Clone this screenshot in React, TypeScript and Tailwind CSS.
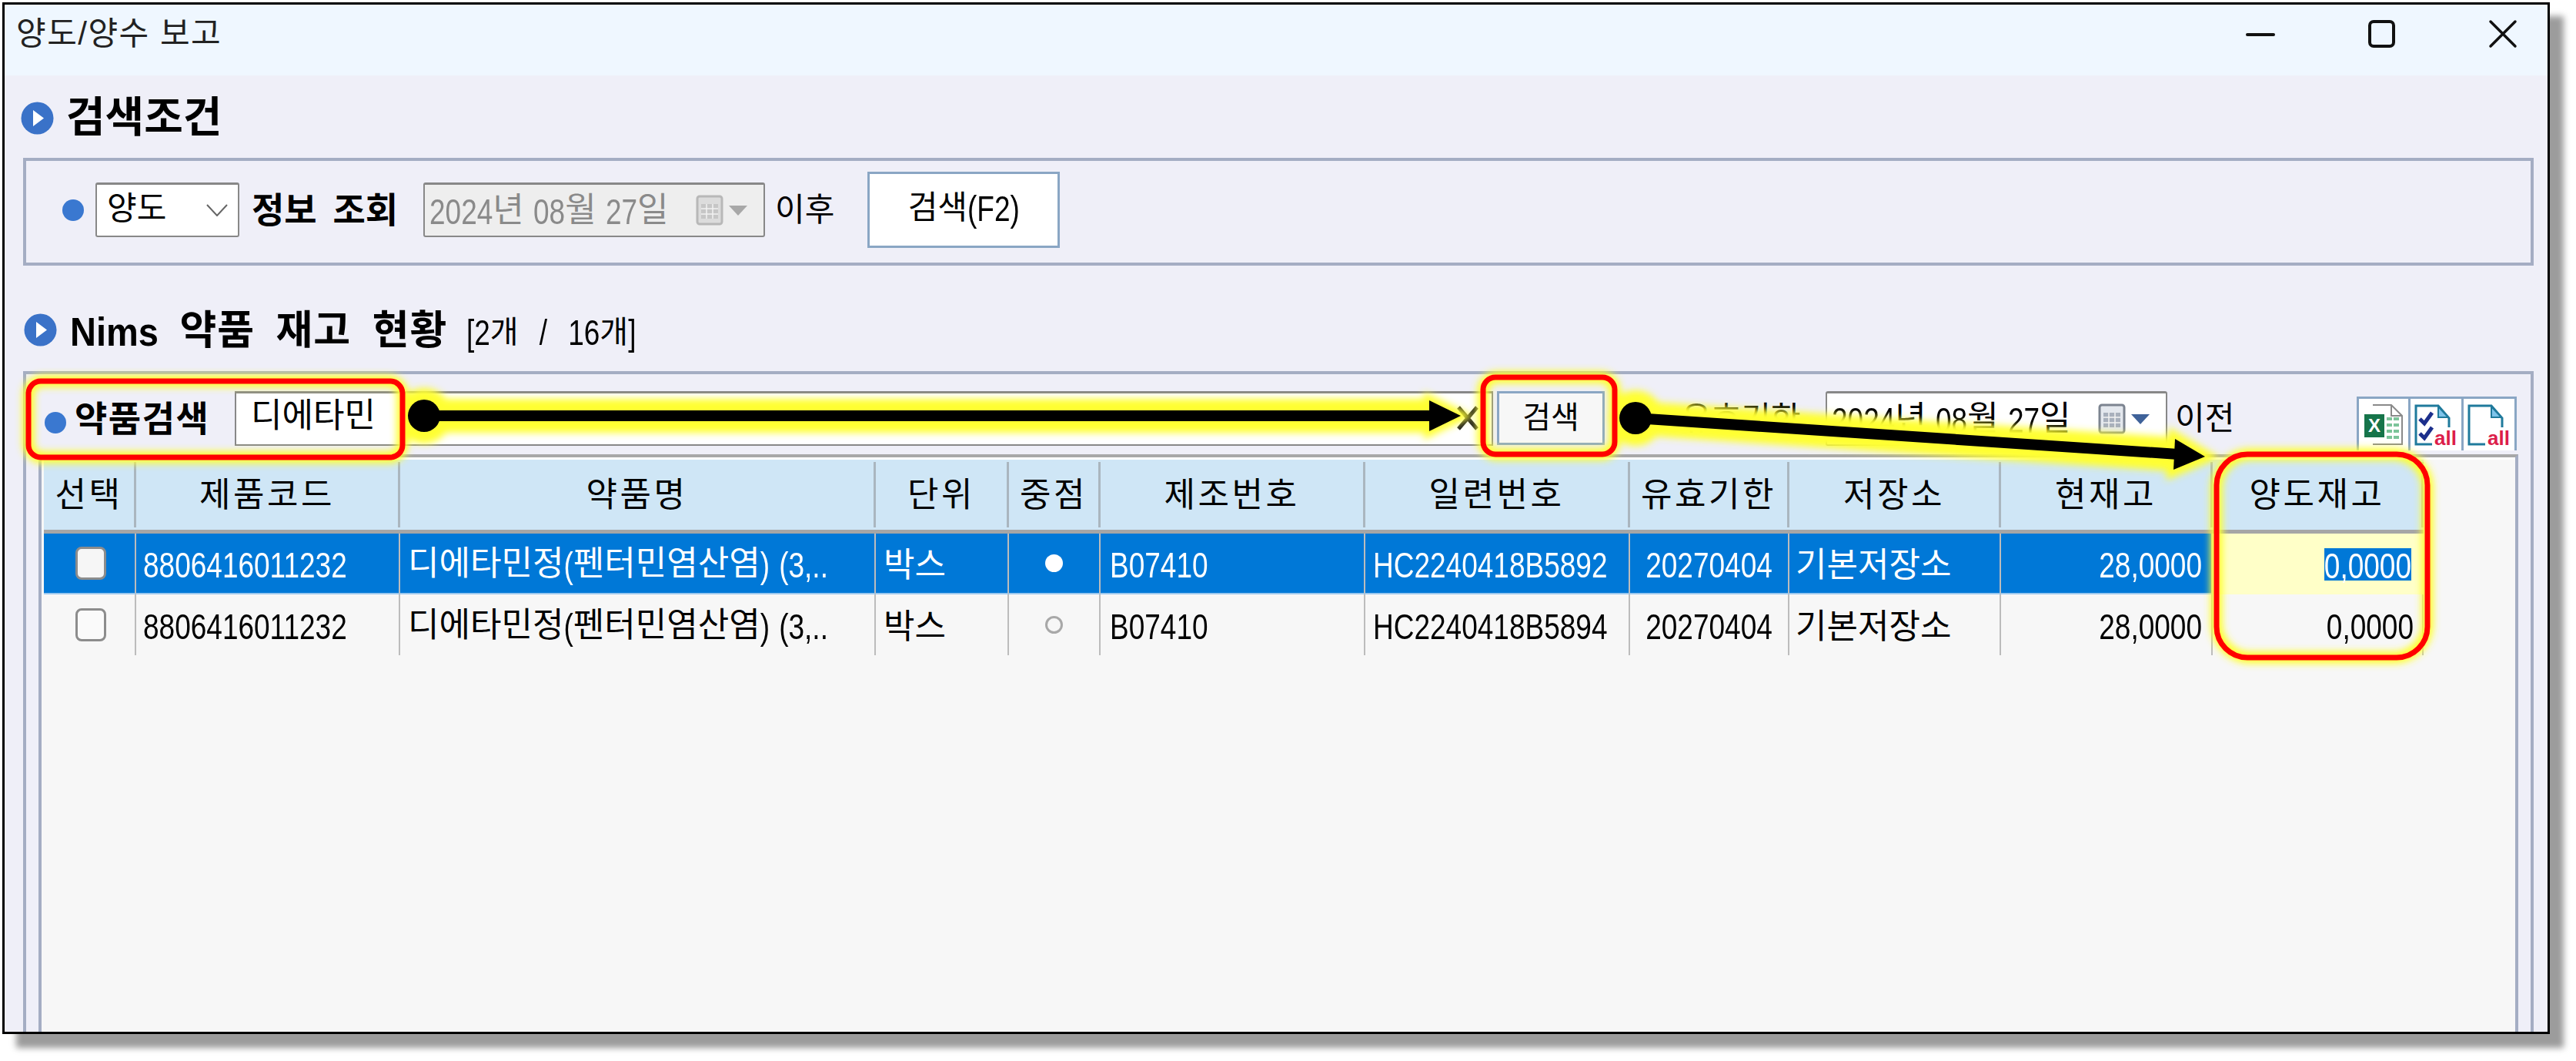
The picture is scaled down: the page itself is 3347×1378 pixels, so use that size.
import React from 'react';

const GRID_COLS = 'grid grid-cols-[120px_343px_618px_173px_119px_344px_344px_207px_275px_275px_274px]';

const HEADERS = ['선택', '제품코드', '약품명', '단위', '중점', '제조번호', '일련번호', '유효기한', '저장소', '현재고', '양도재고'];

const ROWS = [
  { code: '8806416011232', name: '디에타민정(펜터민염산염) (3,..', lot: 'B07410', serial: 'HC2240418B5892', selected: true },
  { code: '8806416011232', name: '디에타민정(펜터민염산염) (3,..', lot: 'B07410', serial: 'HC2240418B5894', selected: false },
];

// latin and digits in the reference are tall and narrow, hangul is not
const Mixed = ({ text }: { text: string }) => (
  <span>
    {text.split(/([^가-힣\s]+)/).map((part, i) =>
      i % 2 === 1 ? (
        <span key={i} className="inline-block text-[37px] scale-y-[1.26] tracking-normal">
          {part}
        </span>
      ) : (
        part
      ),
    )}
  </span>
);

const SectionDot = () => (
  <svg width="43" height="43" viewBox="0 0 43 43" className="shrink-0">
    <circle cx="21.5" cy="21.5" r="21" fill="#3a72c8" />
    <path d="M16 11 L30 21.5 L16 32 Z" fill="#ffffff" />
  </svg>
);

const Bullet = () => <div className="w-[28px] h-[28px] rounded-full bg-[#3a78d0] shrink-0" />;

const CalendarIcon = ({ disabled }: { disabled?: boolean }) => (
  <svg width="68" height="40" viewBox="0 0 68 40" className="shrink-0">
    <rect x="2" y="2" width="32" height="36" rx="3" fill={disabled ? '#dcdcdc' : '#e4e8ee'} stroke={disabled ? '#b8b8b8' : '#7c8490'} strokeWidth="3" />
    <rect x="7" y="12" width="22" height="19" fill={disabled ? '#c6c6c6' : '#a8b0bc'} />
    <path d="M14 12V31M22 12V31M7 18H29M7 25H29" stroke="#f2f2f2" strokeWidth="1.5" />
    <path d="M43 14H67L55 27Z" fill={disabled ? '#a8a8a8' : '#3f6299'} />
  </svg>
);

const ExcelIcon = () => (
  <svg width="52" height="56" viewBox="0 0 52 56">
    <path d="M12 2H36L50 16V53H12" fill="#ffffff" stroke="#8a8a8a" strokeWidth="2" />
    <path d="M36 2V16H50" fill="none" stroke="#8a8a8a" strokeWidth="2" />
    <path d="M30 20H46M30 28H46M30 36H46M30 44H46" stroke="#7cc49a" strokeWidth="4" strokeDasharray="7 2" />
    <rect x="1" y="14" width="26" height="30" fill="#16744a" />
    <text x="14" y="37" textAnchor="middle" fontSize="24" fontWeight="700" fill="#ffffff" fontFamily="Liberation Sans">X</text>
  </svg>
);

const AllIcon = ({ checks }: { checks?: boolean }) => (
  <svg width="58" height="60" viewBox="0 0 58 60" className="mt-[6px]">
    <path d="M24 52H3V2H32L46 18V30" fill="none" stroke="#1f7a9c" strokeWidth="3" />
    <path d="M32 3V17H45Z" fill="#7fc4ea" stroke="#1f7a9c" strokeWidth="2" />
    {checks && <path d="M8 19L14 25L24 11M8 38L14 44L24 30" fill="none" stroke="#1c2f8c" strokeWidth="5" />}
    <text x="56" y="53" textAnchor="end" fontSize="26" fontWeight="700" fill="#dc1e4a" fontFamily="Liberation Sans">all</text>
  </svg>
);

const Annotations = () => (
  <svg width="3347" height="1378" viewBox="0 0 3347 1378" className="absolute left-0 top-0 pointer-events-none">
    <defs>
      <filter id="glow" x="-10%" y="-200%" width="120%" height="500%">
        <feGaussianBlur stdDeviation="5" />
      </filter>
    </defs>
    <g filter="url(#glow)" fill="none" stroke="#ffff30">
      <rect x="37" y="495" width="486" height="99" rx="18" strokeWidth="16" />
      <rect x="1927" y="490" width="171" height="100" rx="18" strokeWidth="16" />
      <rect x="2880" y="590" width="274" height="264" rx="44" strokeWidth="16" />
      <path d="M551 540H1860" strokeWidth="44" />
      <path d="M2125 543L2840 591" strokeWidth="44" />
      <circle cx="551" cy="540" r="22" strokeWidth="28" />
      <circle cx="2125" cy="543" r="22" strokeWidth="28" />
      <path d="M1857 520L1898 540L1857 560Z" strokeWidth="14" />
      <path d="M2826 570L2865 593L2824 610Z" strokeWidth="18" />
    </g>
    <g fill="none" stroke="#ff0000" strokeWidth="7">
      <rect x="37" y="495" width="486" height="99" rx="16" />
      <rect x="1927" y="490" width="171" height="100" rx="16" />
      <rect x="2880" y="590" width="274" height="264" rx="40" />
    </g>
    <path d="M551 540H1860" stroke="#000000" strokeWidth="14" />
    <path d="M1857 520L1898 540L1857 560Z" fill="#000000" />
    <circle cx="551" cy="540" r="21" fill="#000000" />
    <path d="M2125 543L2830 590" stroke="#000000" strokeWidth="14" />
    <path d="M2826 570L2865 593L2824 610Z" fill="#000000" />
    <circle cx="2125" cy="543" r="21" fill="#000000" />
  </svg>
);

export default function App() {
  return (
    <div className="relative w-[3347px] h-[1378px] overflow-hidden bg-white font-['Liberation_Sans','Noto_Sans_CJK_KR',sans-serif] text-[44px] leading-none text-black">
      <div className="ml-[3px] mt-[3px] w-[3310px] h-[1340px] border-[3px] border-black flex flex-col shadow-[18px_18px_8px_#9c9c9c]">
        {/* title bar */}
        <div className="h-[92px] shrink-0 bg-[#eff7ff] flex items-start pl-[15px] pt-[17px]">
          <span className="text-[42px] text-[#222] tracking-[1.5px]">양도/양수 보고</span>
          <div className="ml-auto flex items-start mt-[2px]">
            <svg width="40" height="40" viewBox="0 0 40 40" className="mr-[118px]">
              <path d="M2 20H36" stroke="#111" strokeWidth="4" strokeLinecap="round" />
            </svg>
            <svg width="38" height="38" viewBox="0 0 38 38" className="mr-[119px]">
              <rect x="3" y="3" width="31" height="32" rx="5" fill="none" stroke="#111" strokeWidth="4" />
            </svg>
            <svg width="38" height="38" viewBox="0 0 38 38" className="mr-[39px]">
              <path d="M3 3L35 35M35 3L3 35" stroke="#111" strokeWidth="3.5" strokeLinecap="round" />
            </svg>
          </div>
        </div>

        <div className="flex-1 bg-[#efeff8] flex flex-col min-h-0">
          {/* 검색조건 */}
          <div className="flex items-center h-[47px] mt-[32px] ml-[21px] gap-[16px]">
            <SectionDot />
            <span className="text-[55px] font-bold -mt-[2px]">검색조건</span>
          </div>
          <div className="mt-[28px] ml-[24px] w-[3262px] h-[140px] shrink-0 border-[4px] border-[#a4adc3] flex items-center pl-[47px] pb-[5px]">
            <Bullet />
            <div className="ml-[15px] w-[187px] h-[71px] bg-white border-2 border-[#888] border-t-[3px] rounded-[3px] flex items-center pl-[13px] justify-between pr-[13px]">
              <span className="text-[42px] -mt-[5px]">양도</span>
              <svg width="28" height="16" viewBox="0 0 28 16">
                <path d="M1 1L14 15L27 1" fill="none" stroke="#666" strokeWidth="2" />
              </svg>
            </div>
            <span className="ml-[16px] font-bold text-[46px] [word-spacing:8px] w-[223px] shrink-0">정보 조회</span>
            <div className="w-[444px] h-[71px] bg-[#eeeeee] border-2 border-[#888] border-t-[3px] rounded-[3px] flex items-center pl-[6px]">
              <span className="text-[#8a8a8a] w-[346px] shrink-0">
                <Mixed text="2024년 08월 27일" />
              </span>
              <CalendarIcon disabled />
            </div>
            <span className="ml-[13px] text-[42px]">이후</span>
            <div className="ml-[43px] w-[250px] h-[99px] bg-white border-[3px] border-[#8aa6c4] flex items-center justify-center text-[42px] pb-[6px]">
              <Mixed text="검색(F2)" />
            </div>
          </div>

          {/* Nims 약품 재고 현황 */}
          <div className="flex items-center h-[47px] mt-[60px] ml-[25px]">
            <SectionDot />
            <span className="ml-[17px] font-bold text-[52px] [word-spacing:12px] tracking-[1px] w-[515px] shrink-0">
              <span className="inline-block text-[47px] tracking-normal scale-y-[1.12]">Nims</span> 약품 재고 현황
            </span>
            <span className="text-[40px] mt-[4px] [word-spacing:16px]">
              <Mixed text="[2개 / 16개]" />
            </span>
          </div>
          <div className="mt-[30px] ml-[24px] w-[3262px] flex-1 min-h-0 border-[4px] border-b-0 border-[#a4adc3] flex flex-col">
            {/* toolbar */}
            <div className="h-[104px] shrink-0 flex items-start pl-[24px] pr-[18px]">
              <div className="mt-[49px] shrink-0">
                <Bullet />
              </div>
              <span className="ml-[11px] mt-[35px] font-bold text-[46px] tracking-[1.5px] w-[208px] shrink-0">약품검색</span>
              <div className="mt-[22px] w-[1635px] h-[71px] bg-white border-2 border-[#888] border-t-[3px] flex items-center pl-[19px] pr-[16px] justify-between pb-[8px] shrink-0">
                <span>디에타민</span>
                <svg width="30" height="34" viewBox="0 0 30 34" className="mt-[6px]">
                  <path d="M3 3L27 31M27 3L3 31" stroke="#222" strokeWidth="5" />
                </svg>
              </div>
              <div className="ml-[5px] mt-[22px] w-[140px] h-[70px] bg-[#f7f7f7] border-[3px] border-[#8aa6c4] flex items-center justify-center text-[40px] pb-[3px] shrink-0">
                검색
              </div>
              <div className="ml-[20px] mt-[36px] w-[44px] h-[44px] rounded-full border-2 border-[#888] bg-white shrink-0" />
              <span className="ml-[36px] mt-[37px] text-[42px] w-[187px] shrink-0">유효기한</span>
              <div className="mt-[22px] w-[444px] h-[71px] bg-white border-2 border-[#888] border-t-[3px] rounded-[3px] flex items-center pl-[6px] shrink-0">
                <span className="w-[346px] shrink-0">
                  <Mixed text="2024년 08월 27일" />
                </span>
                <CalendarIcon />
              </div>
              <span className="ml-[10px] mt-[37px] text-[42px]">이전</span>
              <div className="ml-auto mt-[29px] flex h-[70px] border-[3px] border-b-0 border-[#8aa6c4] bg-white shrink-0">
                <div className="w-[67px] border-r-[3px] border-[#8aa6c4] flex items-center justify-center">
                  <ExcelIcon />
                </div>
                <div className="w-[69px] border-r-[3px] border-[#8aa6c4] flex items-center justify-center">
                  <AllIcon checks />
                </div>
                <div className="w-[66px] flex items-center justify-center">
                  <AllIcon />
                </div>
              </div>
            </div>

            {/* grid */}
            <div className="mx-[16px] flex-1 min-h-0 border-[4px] border-b-0 border-[#a4adc3] bg-[#f7f7f7] border-t-[#a8a8a8]">
              <div className="h-[3px] bg-white" />
              <div className="pl-[3px]">
                <div className={`${GRID_COLS} w-[3092px] h-[91px] bg-[#cfe6f6]`}>
                  {HEADERS.map((h) => (
                    <div key={h} className="my-[3px] flex items-center justify-center border-r-[3px] border-[#aab6bf] tracking-[3.5px]">
                      {h}
                    </div>
                  ))}
                </div>
                <div className="w-[3092px] h-[5px] bg-[#a6a6a6]" />
                {ROWS.map((r) => {
                  const fg = r.selected ? 'text-white bg-[#0078d7] border-b-2 border-b-[#9cc8ee]' : 'text-black';
                  const cell = `h-[79px] flex items-center whitespace-nowrap overflow-hidden border-r-2 border-r-[#bcbcbc] ${fg}`;
                  return (
                    <div key={r.serial} className={`${GRID_COLS} w-[3092px]`}>
                      <div className={`${cell} justify-center pl-[3px]`}>
                        <div className={`w-[40px] h-[43px] rounded-[8px] border-[3px] border-[#8c8c8c] ${r.selected ? 'bg-[#f6f6f6]' : 'bg-[#fafafa]'}`} />
                      </div>
                      <div className={`${cell} pl-[9px]`}>
                        <Mixed text={r.code} />
                      </div>
                      <div className={`${cell} pl-[10px]`}>
                        <Mixed text={r.name} />
                      </div>
                      <div className={`${cell} pl-[10px] pt-[5px]`}>박스</div>
                      <div className={`${cell} justify-center`}>
                        <div className={`w-[23px] h-[23px] rounded-full ${r.selected ? 'bg-white' : 'border-[3px] border-[#a8a8a8] bg-[#f7f7f7]'}`} />
                      </div>
                      <div className={`${cell} pl-[12px]`}>
                        <Mixed text={r.lot} />
                      </div>
                      <div className={`${cell} pl-[10px]`}>
                        <Mixed text={r.serial} />
                      </div>
                      <div className={`${cell} justify-center`}>
                        <Mixed text="20270404" />
                      </div>
                      <div className={`${cell} pl-[8px] pt-[5px]`}>기본저장소</div>
                      <div className={`${cell} justify-end pr-[12px]`}>
                        <Mixed text="28,0000" />
                      </div>
                      {r.selected ? (
                        <div className="h-[79px] flex items-center justify-end pr-[16px] bg-[#ffffc8]">
                          <span className="h-[42px] flex items-center bg-[#0078d7] text-white">
                            <Mixed text="0,0000" />
                          </span>
                        </div>
                      ) : (
                        <div className={`${cell} justify-end pr-[11px]`}>
                          <Mixed text="0,0000" />
                        </div>
                      )}
                    </div>
                  );
                })}
              </div>
            </div>
          </div>
        </div>
      </div>
      <Annotations />
    </div>
  );
}
